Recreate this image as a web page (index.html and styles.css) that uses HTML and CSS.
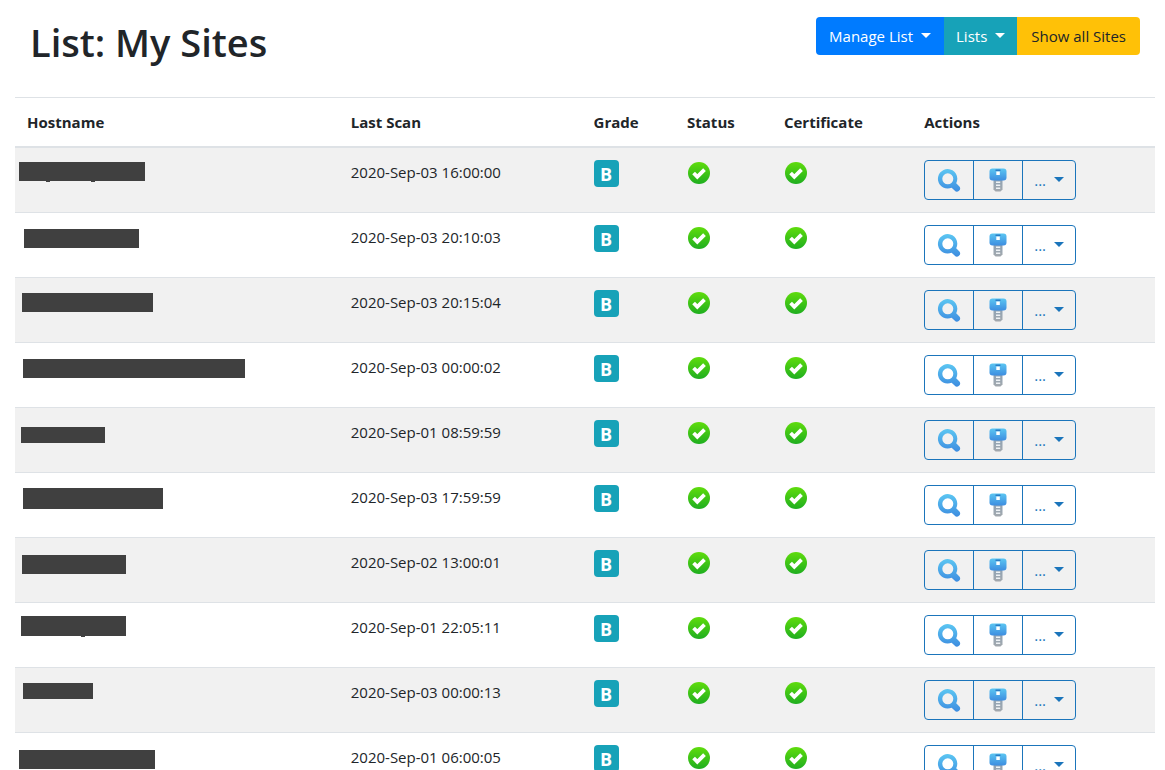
FILE: index.html
```html
<!DOCTYPE html>
<html lang="en">
<head>
<meta charset="utf-8">
<meta name="viewport" content="width=device-width, initial-scale=1">
<title>List: My Sites</title>
<link rel="stylesheet" href="styles.css">
<script src="sites.js" defer></script>
</head>
<body>
<svg class="sprite" aria-hidden="true">
  <defs>
    <linearGradient id="green" x1="0" y1="0" x2="0" y2="1"><stop offset="0" stop-color="#5fdc0c"/><stop offset="1" stop-color="#1fae20"/></linearGradient>
    <linearGradient id="blue" x1="0" y1="0" x2="0" y2="1"><stop offset="0" stop-color="#5bc6f2"/><stop offset="1" stop-color="#3d8de0"/></linearGradient>
    <linearGradient id="steel" x1="0" y1="0" x2="0" y2="1"><stop offset="0" stop-color="#8fa3b5"/><stop offset="1" stop-color="#a3a8ad"/></linearGradient>
    <symbol id="check" viewBox="0 0 24 24">
      <circle cx="12" cy="12" r="11" fill="url(#green)"/>
      <path d="M6.600 12l3.700 3.800 7.200-7.200" fill="none" stroke="#fff" stroke-width="3.800"/>
    </symbol>
    <symbol id="search" viewBox="0 0 24 24">
      <path fill="url(#blue)" fill-rule="evenodd" d="M10.800 1a9.800 9.800 0 1 0 3.800 18.800l3 2.700a2.900 2.900 0 0 0 4.600-4.200l-3-3A9.800 9.800 0 0 0 10.800 1zm0 4.300a5.500 5.500 0 1 1 0 11a5.500 5.500 0 0 1 0-11z"/>
    </symbol>
    <symbol id="key" viewBox="0 0 24 24">
      <path fill="url(#steel)" d="M7.500 11h9v10.500l-2 2h-5l-2-2z"/>
      <path fill="#eef2f5" d="M10 13.500h4.200v1.500H10zM10 16.500h4.200V18H10zM10 19.500h4.200V21H10z"/>
      <rect x="3.500" y="0.500" width="17" height="12" rx="3" fill="url(#blue)"/>
      <path fill="#2b7cc4" d="M9.500 1.500h5v1.500h-5z"/>
      <path fill="#fff" d="M10.300 3.500h3.500v3.500h-3.500z"/>
    </symbol>
  </defs>
</svg>
<main class="page">
  <header class="toolbar">
    <h1 class="title">List: My Sites</h1>
    <div class="btn-group">
      <button type="button" class="btn btn-primary caret">Manage List</button>
      <button type="button" class="btn btn-info caret">Lists</button>
      <button type="button" class="btn btn-warning">Show all Sites</button>
    </div>
  </header>
  <table class="sites">
    <colgroup>
      <col class="col-host"><col class="col-scan"><col class="col-grade"><col class="col-status"><col class="col-cert"><col>
    </colgroup>
    <thead>
      <tr><th scope="col">Hostname</th><th scope="col">Last Scan</th><th scope="col">Grade</th><th scope="col">Status</th><th scope="col">Certificate</th><th scope="col">Actions</th></tr>
    </thead>
    <tbody id="rows"></tbody>
  </table>
</main>
</body>
</html>
```
FILE: sites.js
```js
// Scan time, then the redaction block over the hostname: x, y, width, height,
// and the x positions of letter tails that show below it.
const sites = [
  ["2020-Sep-03 16:00:00", 4, 14, 126, 19, [27, 72]],
  ["2020-Sep-03 20:10:03", 9, 16, 115, 19, []],
  ["2020-Sep-03 20:15:04", 7, 15, 131, 19, []],
  ["2020-Sep-03 00:00:02", 8, 16, 222, 19, []],
  ["2020-Sep-01 08:59:59", 6, 19, 84, 16, []],
  ["2020-Sep-03 17:59:59", 8, 15, 140, 21, []],
  ["2020-Sep-02 13:00:01", 7, 17, 104, 19, []],
  ["2020-Sep-01 22:05:11", 6, 13, 105, 20, [60]],
  ["2020-Sep-03 00:00:13", 8, 15, 70, 16, []],
  ["2020-Sep-01 06:00:05", 4, 17, 136, 19, []]
];

const icon = (name, label) =>
  `<svg class="icon" role="img" aria-label="${label}"><use href="#${name}"/></svg>`;

document.getElementById("rows").innerHTML = sites.map(([scan, x, y, w, h, tails]) => `
  <tr>
    <td class="host"><svg class="redacted" role="img" aria-label="Hidden hostname">
      <rect x="${x}" y="${y}" width="${w}" height="${h}"/>
      ${tails.map(t => `<rect x="${t + x}" y="${y + h}" width="4" height="1"/>`).join("")}
    </svg></td>
    <td>${scan}</td>
    <td><span class="grade">B</span></td>
    <td>${icon("check", "OK")}</td>
    <td>${icon("check", "Valid")}</td>
    <td><div class="actions">
      <button type="button" class="action" aria-label="View scan">${icon("search", "")}</button>
      <button type="button" class="action" aria-label="View certificate">${icon("key", "")}</button>
      <button type="button" class="action caret">...</button>
    </div></td>
  </tr>`).join("");
```
FILE: styles.css
```css
* { box-sizing: border-box; }

body {
  margin: 0;
  background: #fff;
  color: #212529;
  font: 15px/24px "Open Sans", "Noto Sans", sans-serif;
}

.sprite { position: absolute; width: 0; height: 0; }

.page { padding: 16px 10px 0 15px; }

.toolbar {
  display: flex;
  justify-content: space-between;
  align-items: flex-start;
  height: 81px;
  padding: 1px 15px 0;
}

.title {
  margin: 1px 0 0;
  font-size: 38px;
  line-height: 48px;
  font-weight: 600;
}

.btn-group { display: flex; }

.btn {
  height: 38px;
  padding: 0 13px;
  border: 0;
  color: #fff;
  font: inherit;
  white-space: nowrap;
}

.btn:first-child { border-radius: 4px 0 0 4px; }
.btn:last-child { padding: 0 14px; border-radius: 0 4px 4px 0; }
.btn-primary { background: #007bff; }
.btn-info { padding: 0 12px; background: #17a2b8; }
.btn-warning { background: #ffc107; color: #212529; }

.caret::after {
  content: "";
  display: inline-block;
  margin-left: 8px;
  vertical-align: 4px;
  border: 5px solid transparent;
  border-top-color: currentColor;
  border-bottom: 0;
}

.sites {
  width: 100%;
  table-layout: fixed;
  border-collapse: separate;
  border-spacing: 0;
}

.col-host { width: 28.4%; }
.col-scan { width: 21.3%; }
.col-grade { width: 8.2%; }
.col-status { width: 8.5%; }
.col-cert { width: 12.3%; }

th {
  padding: 12px;
  border-top: 1px solid #dee2e6;
  border-bottom: 2px solid #dee2e6;
  text-align: left;
  font-weight: 700;
}

td {
  height: 65px;
  padding: 12px;
  border-bottom: 1px solid #dee2e6;
  vertical-align: top;
}

tbody tr:nth-child(odd) { background: #f1f1f1; }

.host { padding: 0; }

.redacted {
  display: block;
  width: 100%;
  height: 64px;
  fill: #404040;
}

.grade {
  display: block;
  width: 25px;
  height: 27px;
  border-radius: 4px;
  background: #17a2b8;
  color: #fff;
  font-size: 18px;
  line-height: 28px;
  font-weight: 700;
  text-align: center;
}

.icon { display: block; width: 24px; height: 24px; margin-top: 1px; }

.actions { display: flex; }

.action {
  width: 50px;
  height: 40px;
  padding: 0 12px;
  border: 1px solid #1b75bb;
  background: transparent;
  color: #1b75bb;
  font: inherit;
  white-space: nowrap;
}

.action .icon { margin-top: 0; }
.action + .action { margin-left: -1px; }
.action:first-child { border-radius: 4px 0 0 4px; }
.action:last-child { width: 54px; padding: 0 11px; border-radius: 0 4px 4px 0; }
```
